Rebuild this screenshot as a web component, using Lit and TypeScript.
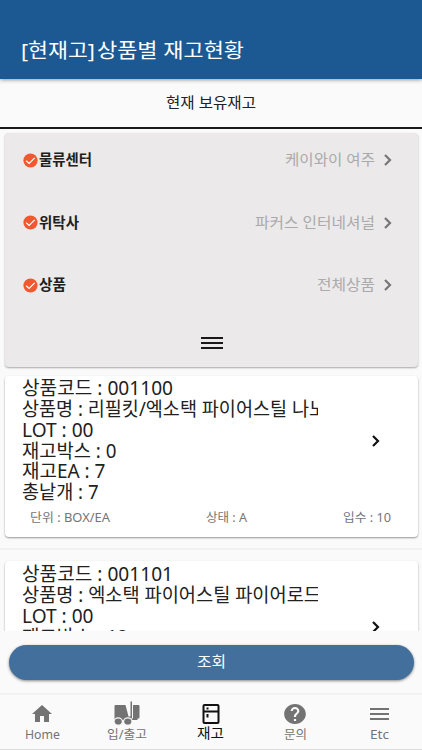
import { LitElement, html, css } from "lit";
import { customElement } from "lit/decorators.js";

// A run of text set to an exact advance width in the design.
const fit = (text: string, width: number, height = 24, base = 18) => html`
  <svg class="fit" width=${width} height=${height} role="text">
    <text x="0" y=${base} textLength=${width} lengthAdjust="spacingAndGlyphs">${text}</text>
  </svg>`;

const chevron = (cls: string) => html`
  <svg class="chev ${cls}" viewBox="0 0 8 12" width="8" height="12">
    <path d="M1 1l5 5-5 5" fill="none" stroke="currentColor" stroke-width="2.2" />
  </svg>`;

const bars = (w: number) => html`
  <svg width=${w} height="14" viewBox="0 0 ${w} 14">
    <path d="M0 2h${w}M0 7h${w}M0 12h${w}" stroke="currentColor" stroke-width="1.8" />
  </svg>`;

const check = html`
  <svg width="15" height="15" viewBox="0 0 15 15">
    <circle cx="7.5" cy="7.5" r="7.1" fill="#f1582f" />
    <path d="M3.2 7.700l2.900 2.700 5.600-5.500" fill="none" stroke="#fff" stroke-width="1.3" />
  </svg>`;

const icons = {
  home: html`<svg width="24" height="24" viewBox="0 0 24 24"><path fill="currentColor" d="M10 20v-6h4v6h5v-8h3L12 3 2 12h3v8z"/></svg>`,
  lift: html`<svg width="28" height="26" viewBox="0 0 28 26"><path fill="currentColor" d="M2.500 4H12.500L15.500 15.500H17.500V.5H19V17.500H16V19H1.500V5Q1.500 4 2.500 4zM20 4h5.500q1 0 1 1v11.500q0 1-1 1H24.500V19H19v-1.500h1z"/><g fill="currentColor" stroke="#fafafa" stroke-width="1.200"><ellipse cx="5.200" cy="20.500" rx="4.200" ry="3.700"/><ellipse cx="14.800" cy="20.500" rx="4.200" ry="3.700"/></g></svg>`,
  stock: html`<svg width="20" height="22" viewBox="0 0 20 22"><path fill="none" stroke="currentColor" stroke-width="2" d="M3.500 2h13q1 0 1 1v16q0 1-1 1h-13q-1 0-1-1v-16q0-1 1-1zM2.500 8.500h15M6.500 4.500v2M6.500 11v3.500"/></svg>`,
  help: html`<svg width="26" height="24" viewBox="0 0 24 24" preserveAspectRatio="none"><path fill="currentColor" d="M12 2C6.480 2 2 6.480 2 12s4.480 10 10 10 10-4.480 10-10S17.520 2 12 2zm1 17h-2v-2h2v2zm2.070-7.750l-.9.920C13.450 12.900 13 13.500 13 15h-2v-.5c0-1.100.45-2.100 1.170-2.830l1.240-1.260c.37-.36.590-.86.590-1.410 0-1.100-.9-2-2-2s-2 .9-2 2H8c0-2.210 1.790-4 4-4s4 1.790 4 4c0 .88-.36 1.680-.93 2.250z"/></svg>`,
  etc: bars(19),
};

@customElement("app-root")
export class AppRoot extends LitElement {
  static styles = css`
    :host { display: flex; flex-direction: column; height: 750px; width: 422px; overflow: hidden;
      box-sizing: border-box; background: #fafafa; color: #212121;
      font-family: "Noto Sans", "Noto Sans CJK KR", sans-serif; }
    svg { display: block; flex: none; }
    .fit { overflow: visible; fill: currentColor; }
    header { height: 79px; box-sizing: border-box; padding: 38px 0 0 21px; background: #1c5992;
      color: #fff; font-size: 20px; flex: none; box-shadow: 0 1px 4px #0006; display: flex; gap: 2px; }
    .tab { height: 50px; box-sizing: border-box; border-bottom: 2px solid #191919; flex: none;
      display: flex; justify-content: center; padding-top: 12px; font-size: 15px; }
    .scroll { height: 502px; overflow: hidden; flex: none; }
    .filters { margin: 4px 4px 0 5px; height: 234px; box-sizing: border-box; background: #ebe9ea;
      border-radius: 4px; box-shadow: 0 1px 2px #0005; padding: 8px 26px 0 18px; }
    .row { height: 38px; margin-bottom: 24.500px; display: flex; align-items: center; }
    .label { font-weight: 700; font-size: 14.500px; flex: 1; color: #202020; margin-left: 1px; }
    .value { color: #aaa; font-size: 15px; margin-right: 9px; }
    .chev { color: #777; }
    .chev.dark { color: #111; }
    .handle { display: flex; justify-content: center; color: #191919; padding: 7px 0 0 8px; }
    .item { height: 183px; border-bottom: 2px solid #f1f1f1; padding: 9px 4px 0 5px; box-sizing: border-box; }
    .item + .item { padding-top: 11px; height: 185px; }
    .item + .item .card { padding-top: 3px; }
    .card { height: 161px; background: #fff; border-radius: 4px; box-shadow: 0 1px 2px #0006;
      box-sizing: border-box; padding: 2px 27px 0 17px; }
    .main { display: flex; align-items: center; justify-content: space-between; height: 125px; }
    .lines { width: 296px; overflow: hidden; font-size: 19px; }
    .line { height: 20.800px; }
    .main .chev { margin-right: 11px; margin-top: 1px; }
    .meta { display: flex; justify-content: space-between; color: #757575; font-size: 12px; padding: 4px 0 0 8px; }
    .action { height: 62px; flex: none; box-sizing: border-box; padding: 14px 8px 0 9px; }
    .btn { height: 35px; border-radius: 18px; background: #426f9b; color: #fff; font-size: 14.500px;
      display: flex; justify-content: center; box-shadow: 0 1px 3px #0007; }
    nav { flex: none; height: 57px; box-sizing: border-box; border-top: 2px solid #f1f1f1; border-bottom: 1px solid #ddd;
      display: grid; grid-template-columns: repeat(5, 1fr); color: #737373; font-size: 12.500px; }
    .nav { display: flex; flex-direction: column; align-items: center; }
    .pic { height: 31px; display: flex; align-items: center; padding-top: 7px; box-sizing: border-box; }
    .active { color: #111; font-size: 14px; }
    .active .fit { margin-top: -1px; }
  `;

  filter(label: string, lw: number, value: string, vw: number) {
    return html`<div class="row">${check}<div class="label">${fit(label, lw, 24, 17)}</div>
      <div class="value">${fit(value, vw, 24, 17)}</div>${chevron("")}</div>`;
  }

  item(lines: [string, number][]) {
    return html`<div class="item"><div class="card">
      <div class="main"><div class="lines">${lines.map(([t, w]) => html`<div class="line">${fit(t, w, 20, 16.6)}</div>`)}</div>${chevron("dark")}</div>
      <div class="meta">${fit("단위 : BOX/EA", 80, 20, 15)}${fit("상태 : A", 41, 20, 15)}${fit("입수 : 10", 48, 20, 15)}</div>
    </div></div>`;
  }

  nav(icon: unknown, label: string, w: number, active = false) {
    return html`<div class="nav ${active ? "active" : ""}"><div class="pic">${icon}</div>${fit(label, w, 20, 13)}</div>`;
  }

  render() {
    return html`
      <header>${fit("[현재고]", 74, 28, 20)}${fit("상품별 재고현황", 147, 28, 20)}</header>
      <div class="tab">${fit("현재 보유재고", 90, 24, 17)}</div>
      <div class="scroll">
        <div class="filters">
          ${this.filter("물류센터", 53, "케이와이 여주", 90)}
          ${this.filter("위탁사", 40, "파커스 인터네셔널", 120)}
          ${this.filter("상품", 27, "전체상품", 58)}
          <div class="handle">${bars(22)}</div>
        </div>
        ${this.item([["상품코드 : 001100", 151], ["상품명 : 리필킷/엑소택 파이어스틸 나노", 304], ["LOT : 00", 71.5], ["재고박스 : 0", 94.5], ["재고EA : 7", 83.5], ["총낱개 : 7", 76.5]])}
        ${this.item([["상품코드 : 001101", 151], ["상품명 : 엑소택 파이어스틸 파이어로드", 299], ["LOT : 00", 71.5], ["재고박스 : 12", 106], ["재고EA : 7", 83.5], ["총낱개 : 7", 76.5]])}
      </div>
      <div class="action"><div class="btn">${fit("조회", 29, 28, 22)}</div></div>
      <nav>
        ${this.nav(icons.home, "Home", 35)}
        ${this.nav(icons.lift, "입/출고", 40)}
        ${this.nav(icons.stock, "재고", 27, true)}
        ${this.nav(icons.help, "문의", 23)}
        ${this.nav(icons.etc, "Etc", 19)}
      </nav>`;
  }
}
